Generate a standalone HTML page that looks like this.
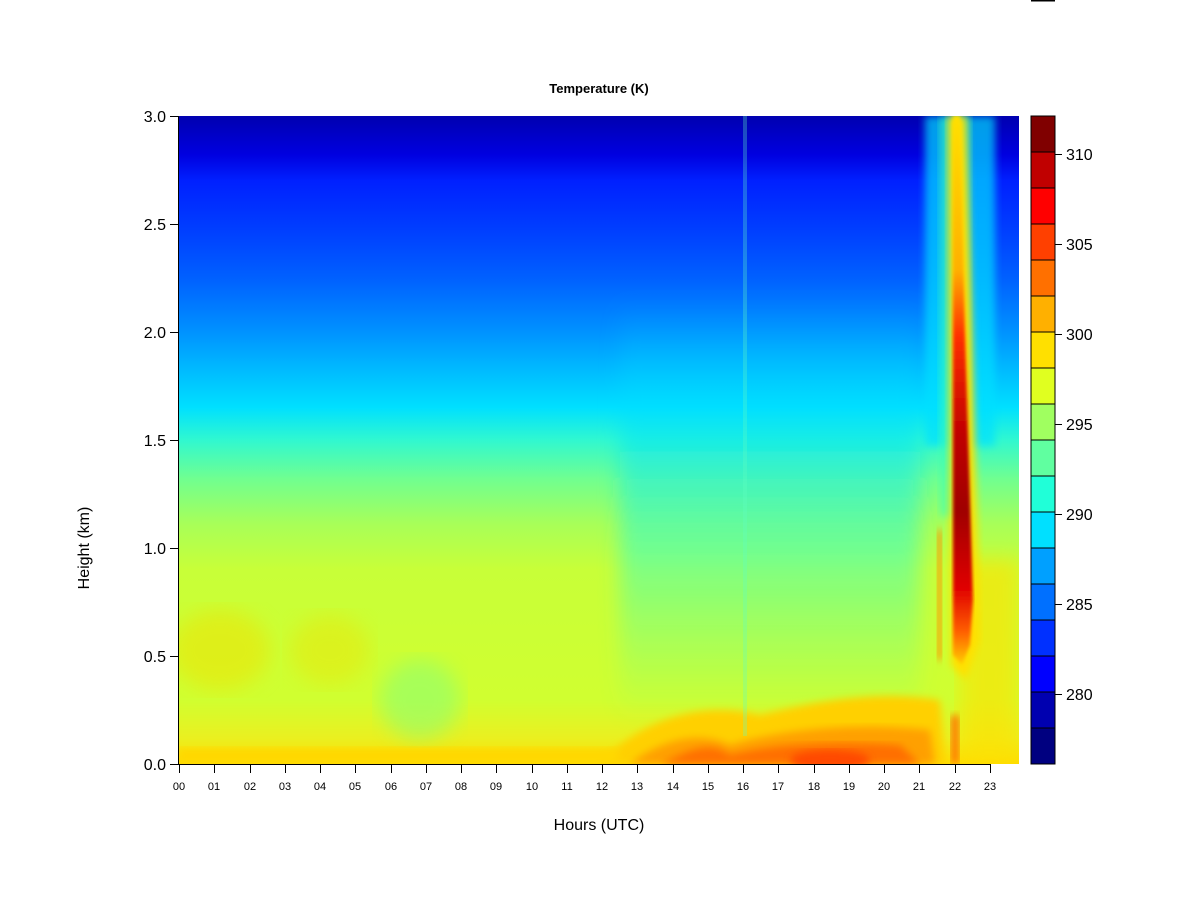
<!DOCTYPE html>
<html><head><meta charset="utf-8"><style>
body{margin:0;width:1200px;height:900px;background:#fff;overflow:hidden}
svg text{font-family:"Liberation Sans",Arial,sans-serif}
</style></head><body>
<svg width="1200" height="900" xmlns="http://www.w3.org/2000/svg">
<defs>
<linearGradient id="bg" x1="0" y1="0" x2="0" y2="1">
<stop offset="0" stop-color="#0000b0"/>
<stop offset="0.06" stop-color="#0000e0"/>
<stop offset="0.1" stop-color="#0020ff"/>
<stop offset="0.18" stop-color="#0040ff"/>
<stop offset="0.25" stop-color="#0060ff"/>
<stop offset="0.33" stop-color="#0090ff"/>
<stop offset="0.4" stop-color="#00c0ff"/>
<stop offset="0.45" stop-color="#00e0ff"/>
<stop offset="0.5" stop-color="#30f8d0"/>
<stop offset="0.56" stop-color="#70ff90"/>
<stop offset="0.63" stop-color="#a8ff58"/>
<stop offset="0.7" stop-color="#c8ff38"/>
<stop offset="0.9" stop-color="#d0ff30"/>
<stop offset="0.96" stop-color="#eaf020"/>
<stop offset="1" stop-color="#ffdc00"/>
</linearGradient>
<linearGradient id="mid" x1="0" y1="0" x2="0" y2="1">
<stop offset="0" stop-color="#00d0ff" stop-opacity="0"/>
<stop offset="0.3" stop-color="#00e0ff" stop-opacity="0.5"/>
<stop offset="0.6" stop-color="#40ffc0" stop-opacity="0.6"/>
<stop offset="1" stop-color="#60ffa0" stop-opacity="0"/>
</linearGradient>
<linearGradient id="plume" x1="0" y1="0" x2="0" y2="1">
<stop offset="0" stop-color="#ffe000"/>
<stop offset="0.28" stop-color="#ffb000"/>
<stop offset="0.4" stop-color="#ff3000"/>
<stop offset="0.58" stop-color="#c00000"/>
<stop offset="0.72" stop-color="#a00000"/>
<stop offset="0.86" stop-color="#e00000"/>
<stop offset="0.94" stop-color="#ff6000"/>
<stop offset="1" stop-color="#ffd000"/>
</linearGradient>
<filter id="b4"><feGaussianBlur stdDeviation="4"/></filter>
<filter id="b2"><feGaussianBlur stdDeviation="1.5"/></filter>
<filter id="b8"><feGaussianBlur stdDeviation="10"/></filter>
<clipPath id="pc"><rect x="178" y="116" width="841" height="648"/></clipPath>
</defs>
<rect x="1031" y="0" width="24" height="1.5" fill="#000"/>
<g clip-path="url(#pc)">
<rect x="178" y="116" width="841" height="648" fill="url(#bg)"/>
<rect x="620" y="300" width="300" height="420" fill="url(#mid)" filter="url(#b8)"/>
<ellipse cx="220" cy="650" rx="50" ry="40" fill="#f0e000" opacity="0.5" filter="url(#b8)"/>
<ellipse cx="330" cy="650" rx="40" ry="35" fill="#f0e000" opacity="0.4" filter="url(#b8)"/>
<ellipse cx="420" cy="700" rx="40" ry="40" fill="#80ff80" opacity="0.5" filter="url(#b8)"/>
<path d="M600 764 C640 720 700 700 760 715 C820 700 880 690 940 700 L945 764 Z" fill="#ffd000" filter="url(#b4)"/>
<path d="M630 764 C660 740 700 730 730 745 C760 735 840 720 930 730 L935 764 Z" fill="#ffa000" filter="url(#b4)"/>
<path d="M660 764 C690 750 710 740 730 755 C770 745 830 740 900 745 L920 764 Z" fill="#ff7000" filter="url(#b4)"/>
<ellipse cx="830" cy="760" rx="40" ry="10" fill="#ff4800" filter="url(#b4)"/>
<rect x="178" y="748" width="440" height="16" fill="#ffd800" filter="url(#b4)"/>
<rect x="960" y="560" width="59" height="204" fill="#ffe000" opacity="0.6" filter="url(#b8)"/>
<rect x="925" y="116" width="70" height="330" fill="#00e0ff" opacity="0.7" filter="url(#b4)"/>
<rect x="940" y="116" width="30" height="400" fill="#40ffb0" opacity="0.6" filter="url(#b4)"/>
<path d="M948 116 L966 116 L972 330 L980 640 L966 680 L951 665 Z" fill="#ffe000" filter="url(#b4)"/>
<path d="M953 116 L960 116 L965 330 L973 600 L970 645 L962 665 L953 655 Z" fill="url(#plume)" filter="url(#b2)"/>
<rect x="937" y="530" width="5" height="130" fill="#ff9000" filter="url(#b4)"/>
<rect x="951" y="715" width="8" height="49" fill="#ff7000" filter="url(#b4)"/>
<rect x="743" y="116" width="4" height="620" fill="#60ffc0" opacity="0.3"/>
</g>
<g stroke="#000" stroke-width="1" fill="none">
<line x1="178.5" y1="116" x2="178.5" y2="764"/>
<line x1="178" y1="764.5" x2="990" y2="764.5"/>
</g>
<g stroke="#000" stroke-width="1">
<line x1="170" y1="116.5" x2="178" y2="116.5"/><line x1="170" y1="224.5" x2="178" y2="224.5"/><line x1="170" y1="332.5" x2="178" y2="332.5"/><line x1="170" y1="440.5" x2="178" y2="440.5"/><line x1="170" y1="548.5" x2="178" y2="548.5"/><line x1="170" y1="656.5" x2="178" y2="656.5"/><line x1="170" y1="764.5" x2="178" y2="764.5"/>
</g>
<g font-size="16" text-anchor="end" fill="#000">
<text x="166" y="122">3.0</text><text x="166" y="230">2.5</text><text x="166" y="338">2.0</text><text x="166" y="446">1.5</text><text x="166" y="554">1.0</text><text x="166" y="662">0.5</text><text x="166" y="770">0.0</text>
</g>
<g font-size="11" text-anchor="middle" fill="#000">
<text x="179" y="790">00</text><text x="214" y="790">01</text><text x="250" y="790">02</text><text x="285" y="790">03</text><text x="320" y="790">04</text><text x="355" y="790">05</text><text x="391" y="790">06</text><text x="426" y="790">07</text><text x="461" y="790">08</text><text x="496" y="790">09</text><text x="532" y="790">10</text><text x="567" y="790">11</text><text x="602" y="790">12</text><text x="637" y="790">13</text><text x="673" y="790">14</text><text x="708" y="790">15</text><text x="743" y="790">16</text><text x="778" y="790">17</text><text x="814" y="790">18</text><text x="849" y="790">19</text><text x="884" y="790">20</text><text x="919" y="790">21</text><text x="955" y="790">22</text><text x="990" y="790">23</text>
</g>
<g stroke="#000">
<path d="M179.5 764v9M214.5 764v9M250.5 764v9M285.5 764v9M320.5 764v9M355.5 764v9M391.5 764v9M426.5 764v9M461.5 764v9M496.5 764v9M532.5 764v9M567.5 764v9M602.5 764v9M637.5 764v9M673.5 764v9M708.5 764v9M743.5 764v9M778.5 764v9M814.5 764v9M849.5 764v9M884.5 764v9M919.5 764v9M955.5 764v9M990.5 764v9"/>
</g>
<text x="599" y="830" font-size="16" text-anchor="middle">Hours (UTC)</text>
<text transform="translate(89,548) rotate(-90)" font-size="16" text-anchor="middle">Height (km)</text>
<text x="599" y="93" font-size="13" font-weight="bold" text-anchor="middle">Temperature (K)</text>
<g stroke="#000" stroke-width="1">
<rect x="1031" y="116" width="24" height="36" fill="#800000"/>
<rect x="1031" y="152" width="24" height="36" fill="#c00000"/>
<rect x="1031" y="188" width="24" height="36" fill="#ff0000"/>
<rect x="1031" y="224" width="24" height="36" fill="#ff4000"/>
<rect x="1031" y="260" width="24" height="36" fill="#ff7000"/>
<rect x="1031" y="296" width="24" height="36" fill="#ffb000"/>
<rect x="1031" y="332" width="24" height="36" fill="#ffe000"/>
<rect x="1031" y="368" width="24" height="36" fill="#e0ff20"/>
<rect x="1031" y="404" width="24" height="36" fill="#a0ff60"/>
<rect x="1031" y="440" width="24" height="36" fill="#60ffa0"/>
<rect x="1031" y="476" width="24" height="36" fill="#20ffd8"/>
<rect x="1031" y="512" width="24" height="36" fill="#00e0ff"/>
<rect x="1031" y="548" width="24" height="36" fill="#00a0ff"/>
<rect x="1031" y="584" width="24" height="36" fill="#0070ff"/>
<rect x="1031" y="620" width="24" height="36" fill="#0030ff"/>
<rect x="1031" y="656" width="24" height="36" fill="#0000ff"/>
<rect x="1031" y="692" width="24" height="36" fill="#0000b0"/>
<rect x="1031" y="728" width="24" height="36" fill="#000080"/>
<path d="M1055 154.5h7M1055 244.5h7M1055 334.5h7M1055 424.5h7M1055 514.5h7M1055 604.5h7M1055 694.5h7"/>
</g>
<g font-size="16" fill="#000">
<text x="1066" y="160">310</text><text x="1066" y="250">305</text><text x="1066" y="340">300</text><text x="1066" y="430">295</text><text x="1066" y="520">290</text><text x="1066" y="610">285</text><text x="1066" y="700">280</text>
</g>
</svg>
</body></html>
